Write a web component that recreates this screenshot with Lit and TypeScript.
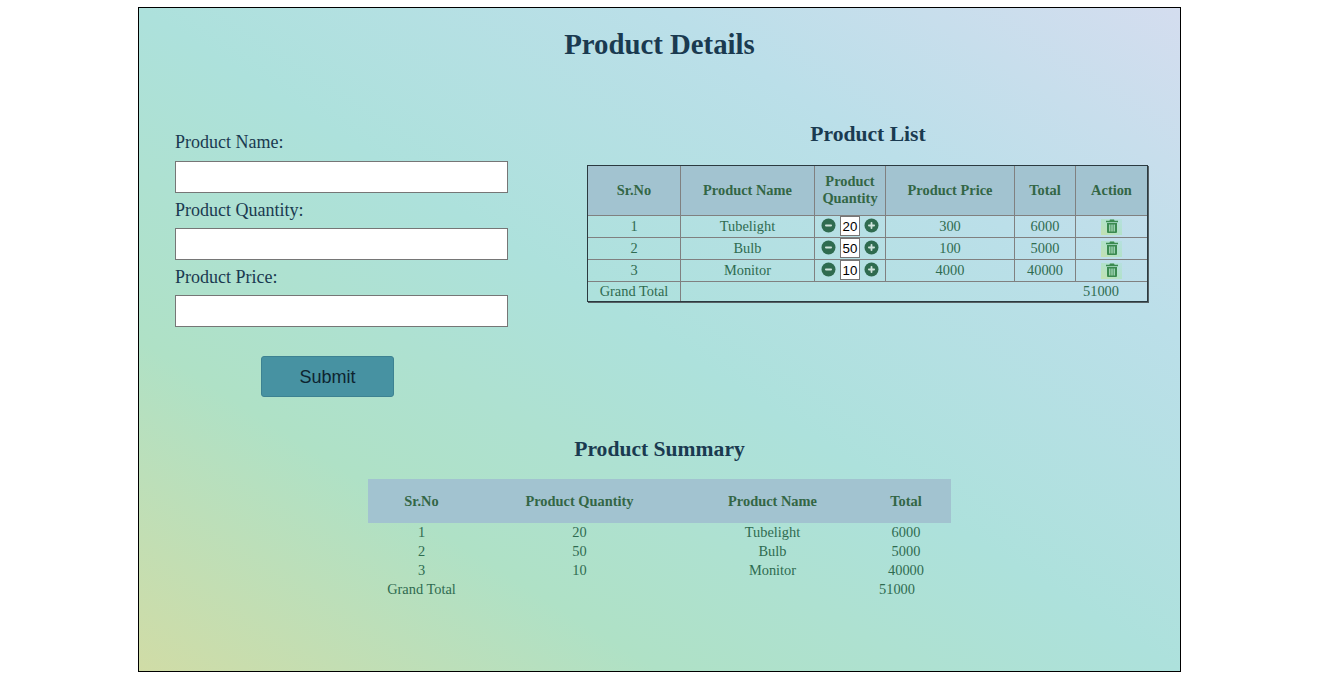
import { customElement, property } from "lit/decorators.js";
import { css, html, LitElement } from "lit";

const products = [
  { name: "Tubelight", qty: 20, price: 300, total: 6000 },
  { name: "Bulb", qty: 50, price: 100, total: 5000 },
  { name: "Monitor", qty: 10, price: 4000, total: 40000 },
];

@customElement("qty-stepper")
export class QtyStepper extends LitElement {
  static styles = css`
    :host {
      display: flex;
      align-items: center;
      justify-content: center;
      gap: 4px;
    }
    svg {
      width: 15px;
      height: 15px;
      display: block;
      margin-top: -2px;
    }
    .box {
      width: 20px;
      height: 20px;
      box-sizing: border-box;
      border: 1px solid #767676;
      background: #fff;
      color: #000;
      font: 13.3px "Liberation Sans", sans-serif;
      display: flex;
      align-items: center;
      justify-content: center;
    }
  `;

  @property({ type: Number })
  value = 0;

  render() {
    return html`
      <svg viewBox="0 0 15 15">
        <circle cx="7.5" cy="7.5" r="7" fill="#2f6b4f"></circle>
        <rect x="4" y="6.6" width="7" height="1.8" rx="0.8" fill="#cfe3dc"></rect>
      </svg>
      <span class="box">${this.value}</span>
      <svg viewBox="0 0 15 15">
        <circle cx="7.5" cy="7.5" r="7" fill="#2f6b4f"></circle>
        <rect x="4" y="6.6" width="7" height="1.8" rx="0.8" fill="#cfe3dc"></rect>
        <rect x="6.6" y="4" width="1.8" height="7" rx="0.8" fill="#cfe3dc"></rect>
      </svg>
    `;
  }
}

@customElement("trash-button")
export class TrashButton extends LitElement {
  static styles = css`
    :host {
      display: block;
      width: 21px;
      height: 16px;
      margin: 2px auto 0;
      background: linear-gradient(to top right, #c4e0b0, #b2e2c8, #b6e0e0);
    }
    svg {
      display: block;
      width: 12px;
      height: 14px;
      margin: 1px auto 0;
    }
  `;

  render() {
    return html`<svg viewBox="0 0 12 14">
      <path
        fill="#3a8a50"
        fill-rule="evenodd"
        d="M4 .5h4l.6 1.200H12v1.600H0V1.700h3.400zM1 4h10v9a1 1 0 0 1-1 1H2a1 1 0 0 1-1-1zm2.200 1.600v6.800h1.200V5.600zm2.200 0v6.800h1.200V5.600zm2.200 0v6.800h1.200V5.600z"
      ></path>
    </svg>`;
  }
}

@customElement("app-root")
export class AppRoot extends LitElement {
  static styles = css`
    :host {
      display: block;
      font-family: "Liberation Serif", serif;
    }
    .page {
      box-sizing: border-box;
      width: 1043px;
      height: 665px;
      margin: 7px 0 0 138px;
      border: 1px solid #000;
      background: linear-gradient(
        to top right,
        #d0dca6 0%,
        #afe1c6 25%,
        #ade1dc 50%,
        #bbdfe9 75%,
        #d4ddef 100%
      );
      color: #1a3a50;
    }
    h1 {
      margin: 0;
      padding-top: 20px;
      font-size: 28.8px;
      line-height: 32px;
      text-align: center;
    }
    h2 {
      margin: 0;
      font-size: 21.6px;
      line-height: 26px;
      text-align: center;
    }
    .columns {
      display: flex;
      margin-top: 61px;
    }
    .form {
      box-sizing: border-box;
      width: 448px;
      padding: 11px 0 0 36px;
      display: flex;
      flex-direction: column;
    }
    label {
      font-size: 18px;
      line-height: 21px;
      height: 21px;
      color: #1a3a50;
    }
    .field {
      box-sizing: border-box;
      width: 333px;
      height: 32px;
      border: 1px solid #767676;
      background: #fff;
      margin: 8px 0 7px;
    }
    .field:nth-of-type(n + 2) {
      margin-top: 7px;
    }
    button {
      box-sizing: border-box;
      align-self: flex-start;
      width: 133px;
      height: 41px;
      margin: 22px 0 0 86px;
      padding: 1px 0 0;
      border: 1px solid #3d8292;
      border-radius: 3px;
      background: #4792a2;
      color: #0d2430;
      font: 18px "Liberation Sans", sans-serif;
    }
    .list {
      width: 562px;
    }
    table {
      font-size: 14.4px;
      color: #2f6b50;
      text-align: center;
    }
    th {
      color: #336645;
      background: #a2c3d0;
      font-weight: bold;
    }
    .list table {
      width: 561px;
      margin-top: 18px;
      border-collapse: collapse;
      table-layout: fixed;
      outline: 1px solid #2b3a40;
      outline-offset: -1px;
      box-shadow: 1px 1px 0 #555f63;
    }
    .list th,
    .list td {
      border: 1px solid #808080;
      padding: 0 0 1px;
    }
    .list th {
      height: 48px;
      line-height: 17px;
    }
    .list td {
      height: 20px;
      line-height: 16px;
    }
    .list tr.grand td {
      height: 18px;
    }
    .list td.sum {
      text-align: right;
      padding-right: 28px;
    }
    .c1 { width: 92px; }
    .c2 { width: 133px; }
    .c3 { width: 70px; }
    .c4 { width: 128px; }
    .c5 { width: 60px; }
    .c6 { width: 71px; }
    .summary {
      margin-top: 39px;
    }
    .summary table {
      width: 583px;
      margin: 17px auto 0;
      border-collapse: collapse;
      table-layout: fixed;
    }
    .summary th {
      height: 44px;
      padding: 0;
    }
    .summary td {
      height: 19px;
      line-height: 19px;
      padding: 0;
    }
    .summary td.sum {
      text-align: right;
      padding-right: 36px;
    }
    .s1 { width: 107px; }
    .s2 { width: 209px; }
    .s3 { width: 177px; }
    .s4 { width: 90px; }
  `;

  render() {
    return html`
      <div class="page">
        <h1>Product Details</h1>
        <div class="columns">
          <form class="form" @submit=${(e: Event) => e.preventDefault()}>
            <label>Product Name:</label>
            <div class="field"></div>
            <label>Product Quantity:</label>
            <div class="field"></div>
            <label>Product Price:</label>
            <div class="field"></div>
            <button type="submit">Submit</button>
          </form>
          <section class="list">
            <h2>Product List</h2>
            <table>
              <thead>
                <tr>
                  <th class="c1">Sr.No</th>
                  <th class="c2">Product Name</th>
                  <th class="c3">Product Quantity</th>
                  <th class="c4">Product Price</th>
                  <th class="c5">Total</th>
                  <th class="c6">Action</th>
                </tr>
              </thead>
              <tbody>
                ${products.map(
                  (p, i) => html`<tr>
                    <td>${i + 1}</td>
                    <td>${p.name}</td>
                    <td><qty-stepper .value=${p.qty}></qty-stepper></td>
                    <td>${p.price}</td>
                    <td>${p.total}</td>
                    <td><trash-button></trash-button></td>
                  </tr>`
                )}
                <tr class="grand">
                  <td>Grand Total</td>
                  <td class="sum" colspan="5">51000</td>
                </tr>
              </tbody>
            </table>
          </section>
        </div>
        <section class="summary">
          <h2>Product Summary</h2>
          <table>
            <thead>
              <tr>
                <th class="s1">Sr.No</th>
                <th class="s2">Product Quantity</th>
                <th class="s3">Product Name</th>
                <th class="s4">Total</th>
              </tr>
            </thead>
            <tbody>
              ${products.map(
                (p, i) => html`<tr>
                  <td>${i + 1}</td>
                  <td>${p.qty}</td>
                  <td>${p.name}</td>
                  <td>${p.total}</td>
                </tr>`
              )}
              <tr>
                <td>Grand Total</td>
                <td class="sum" colspan="3">51000</td>
              </tr>
            </tbody>
          </table>
        </section>
      </div>
    `;
  }
}
